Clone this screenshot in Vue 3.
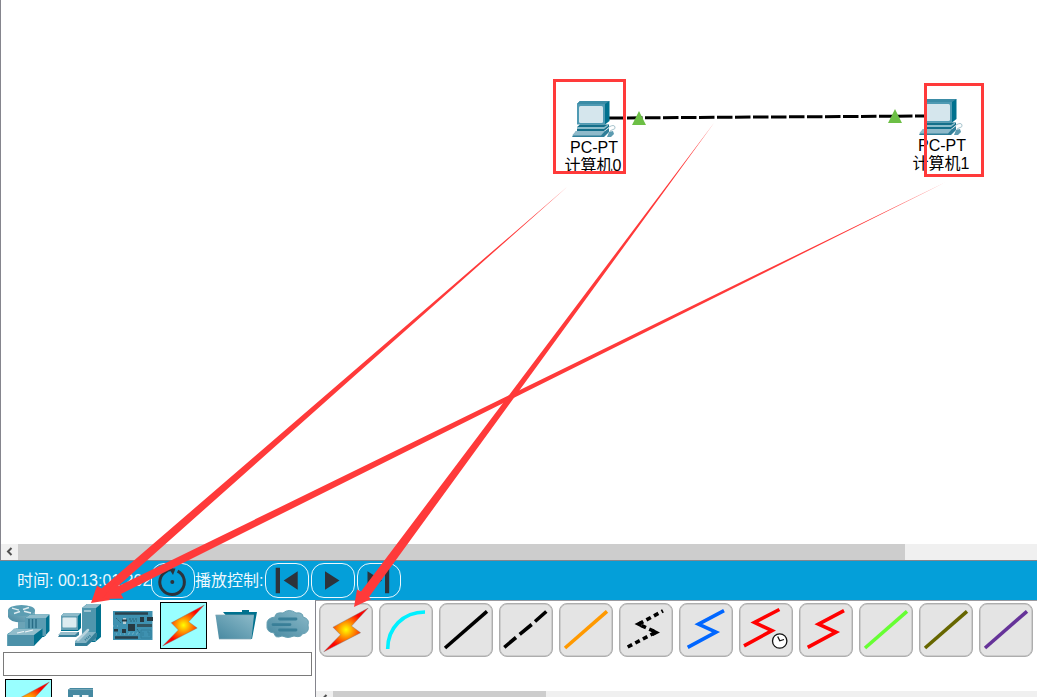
<script setup>
const nodes = [
  { id: 0, cls: 'node-a', name: '计算机0' },
  { id: 1, cls: 'node-b', name: '计算机1' }
]
const Z = 'M8.7 44.3 L37 29.1 L19.5 21.2 L45 7.7'
const L = 'M6 45 L48 8.3'
const cables = [
  { id: 'auto' },
  { id: 'console', d: 'M8.7 46 C8.7 25 24 9 46 9', color: '#00f0ff' },
  { id: 'straight', d: L, color: '#000' },
  { id: 'cross', d: 'M5.3 44.3 L17 34.5 M20.7 31.3 L32.7 21.5 M36 18.5 L47.3 8.5', color: '#000' },
  { id: 'fiber', d: L, color: '#ff9900' },
  { id: 'phone', d: 'M8.7 44 L37 29.1 L19.5 21.2 L44 7.9', color: '#000', dash: '5 3.6' },
  { id: 'coax', d: Z, color: '#0066ff' },
  { id: 'dce', d: 'M5 42.8 L33 27.6 L15.5 19.5 L40.4 6.5', color: '#ff0000', clock: true },
  { id: 'dte', d: Z, color: '#ff0000' },
  { id: 'octal', d: L, color: '#66ff33' },
  { id: 'iot', d: L, color: '#666600' },
  { id: 'usb', d: L, color: '#663399' }
]
</script>

<template>
  <div class="app">
    <svg class="defs" width="0" height="0">
      <defs>
        <radialGradient id="fire" gradientUnits="userSpaceOnUse" cx="23" cy="22.7" r="18">
          <stop offset="0" stop-color="#ffff00" />
          <stop offset=".4" stop-color="#ff9500" />
          <stop offset="1" stop-color="#ff0000" />
        </radialGradient>
        <linearGradient id="steel" x1="0" y1="1" x2="1" y2="0">
          <stop offset="0" stop-color="#4688a0" />
          <stop offset="1" stop-color="#8cbac9" />
        </linearGradient>
        <symbol id="bolt" viewBox="0 0 46 46">
          <path d="M44.3 2 L28.3 19.2 L37 25.6 L1.7 43.9 L17.7 27.6 L10.5 20.3 Z" fill="url(#fire)" stroke="#777" stroke-width=".4" />
        </symbol>
      </defs>
    </svg>

    <main class="workspace">
      <svg class="link" width="330" height="30" viewBox="600 103 330 30">
        <path d="M609 118 L925 116" stroke="#000" stroke-width="3" stroke-dasharray="15.5 2.5" />
        <path d="M639 111 L646 125 H632 Z M895 109 L902 123 H888 Z" fill="#6cbf45" />
      </svg>
      <div v-for="n in nodes" :key="n.id" class="node" :class="n.cls">
        <svg width="46" height="40" viewBox="571 99 46 40">
          <path d="M577 104 L580 101 H609.5 V121 L605 124.5 Z" fill="#00718e" />
          <path d="M577 104 L580 101 H609.5 L605 104 Z" fill="#3b8ca6" />
          <path d="M577 104 H605 V124.5 H577 Z" fill="#4f9ab3" />
          <rect x="579" y="106" width="24" height="17" rx="1.5" fill="#d5e6ed" />
          <path d="M577 127 L580 124.5 H609 V127 L604 131 H577 Z" fill="#146f8a" />
          <path d="M577 127 H604 L608 124.5 V126 L604 129 H577 Z" fill="#8cbdcb" />
          <path d="M576 131 H605 L609 128 V132 L604 137 H572 Z" fill="#307f99" />
          <path d="M576 131 H605 L601 135.5 H572 Z" fill="#8fbaca" />
          <path d="M609 127 Q614 124 615 127 Q616 129 612 130 Q608 131 612 133" fill="none" stroke="#a7c4cd" />
          <path d="M609 132 L613 131 L614 134 L611 137 H607 Z" fill="#5c9bb0" />
        </svg>
        <span>PC-PT</span>
        <span class="name">{{ n.name }}</span>
      </div>
    </main>

    <div class="scroll main-scroll">
      <svg width="17" height="15" viewBox="0 0 17 15"><path d="M10.5 4 L7 7.5 L10.5 11" fill="none" stroke="#505050" stroke-width="2" /></svg>
      <div class="thumb"></div>
    </div>

    <div class="bar">
      <span class="time">时间: 00:13:01.202</span>
      <button class="ctl reset">
        <svg width="42" height="33" viewBox="152 564 42 33"><path d="M167 571 A12.3 12.3 0 1 0 177.6 571.2" fill="none" stroke="#2d333b" stroke-width="3" /><path d="M163.5 573.5 Q167 569.5 173 569.7" fill="none" stroke="#2d333b" stroke-width="2.4" /><path d="M169 568.5 L175.5 568.5 L173 575 Z" fill="#2d333b" /><circle cx="172.3" cy="582" r="2" fill="#2d333b" /></svg>
      </button>
      <span class="label">播放控制:</span>
      <button class="ctl">
        <svg width="42" height="33" viewBox="266 564 42 33"><path d="M275.7 567.7 H280 V593.3 H275.7 Z M297.7 571.3 V589.7 L283.7 580.4 Z" fill="#2d333b" /></svg>
      </button>
      <button class="ctl">
        <svg width="42" height="33" viewBox="312 564 42 33"><path d="M325 571.3 L339.5 580.4 L325 589.7 Z" fill="#2d333b" /></svg>
      </button>
      <button class="ctl">
        <svg width="42" height="33" viewBox="358 564 42 33"><path d="M385 567.7 H389.2 V593.3 H385 Z M367.5 571.3 L382 580.4 L367.5 589.7 Z" fill="#2d333b" /></svg>
      </button>
    </div>

    <div class="bottom">
      <section class="devices">
        <div class="categories">
          <svg width="53" height="48" viewBox="0 602 53 48">
            <path d="M8 610 V617 Q10 622 21 622.5 Q32 622 35 617 V610 Z" fill="url(#steel)" />
            <ellipse cx="21.5" cy="610.5" rx="13.5" ry="5.5" fill="#5c9db2" />
            <path d="M12 608.2 L19 610.2 M31 613 L24 611.2 M14 613.5 L20 611.5 M29 607.5 L23 609.5" stroke="#dfecf1" stroke-width="1.4" />
            <path d="M18 622 H26 V629 H18 Z" fill="#6ba4b7" />
            <path d="M25 618 L30 614.5 H49.5 V631 L44 637 H25 Z" fill="#00718e" />
            <path d="M25 618 L30 614.5 H49.5 L46 618 Z" fill="#8ebbca" />
            <path d="M25 618 H46 V636 H25 Z" fill="#5a9cb2" />
            <path d="M29 619 V630 M32.5 619 V630 M36 619 V630" stroke="#276c85" stroke-width="1.4" />
            <path d="M7.5 634 L16 628.5 H42.5 V637 L34 646 H7.5 Z" fill="#00718e" />
            <path d="M7.5 635 L14 628.5 H42.5 L34 635 Z" fill="#91bdcb" />
            <path d="M7.5 635 H34 V646 H7.5 Z" fill="#4c91a9" />
            <path d="M17 633 L24 631.5 M25 632 L33 630" stroke="#eef5f8" stroke-width="1.2" />
          </svg>
          <svg width="53" height="48" viewBox="53 602 53 48">
            <path d="M82 608 L87 604 H101 V637 L95 642 H82 Z" fill="#00718e" />
            <path d="M82 608 L87 604 H101 L96 608 Z" fill="#8ebbca" />
            <path d="M82 608 H96 V641 H82 Z" fill="#4f96ad" />
            <path d="M84 611 H91" stroke="#9cc3d1" stroke-width="2" />
            <path d="M61 616 L64 613 H81 V628 L78 631 H61 Z" fill="#00718e" />
            <path d="M61 616 L64 613 H81 L78 616 Z" fill="#8ebbca" />
            <path d="M61 616 H78 V630 H61 Z" fill="#649fb3" />
            <rect x="62.5" y="617.5" width="14" height="10" rx="1" fill="#dcebf0" />
            <path d="M61 632 H79 V635 L76 637 H58 Z" fill="#37809a" />
            <path d="M61 632 H78 L75 635 H58 Z" fill="#97bdcb" />
            <path d="M75 642 L85 632 L97 633 V637 L87 646 H75 Z" fill="#357f98" />
            <path d="M75 641 L85 632 H96 L86 643 H75 Z" fill="#83b3c4" />
            <path d="M78 640 L88 630" stroke="#b8d3dd" stroke-width="2.5" stroke-linecap="round" />
            <path d="M85 640 L91 635" stroke="#397f96" stroke-width="2" stroke-dasharray="1 1" />
          </svg>
          <svg width="54" height="48" viewBox="106 602 54 48">
            <rect x="113" y="611" width="39.5" height="29" fill="#3e91b0" />
            <path d="M115 613.5 H148" stroke="#29424e" stroke-width="2.6" />
            <path d="M115 637.5 H138" stroke="#29424e" stroke-width="2.6" />
            <path d="M128 624 H135 V631 H128 Z M140 617 H144 V622 H140 Z M147 617 H153 V621 H147 Z M122 629 H126 V633 H122 Z M114 629 H118 V631.5 H114 Z" fill="#263942" />
            <path d="M137 625.5 H152" stroke="#31545f" stroke-width="3" />
            <path d="M123 618 H126 V624 H123 Z" fill="#b9cdd4" />
            <path d="M122 620.5 H127" stroke="#263942" stroke-width="2" />
            <path d="M116 618 L121 623 M129 619 H137 M130 621 H137 M137 629 L140 633" stroke="#286579" stroke-dasharray="2 1" />
            <path d="M141 630 H151 V638 H141 Z M143 632 V636 M147 632 H149 V636" fill="none" stroke="#33809c" />
            <path d="M113 626 H121 M116 634 H137 M129 633 H139" stroke="#79b4c9" stroke-dasharray="1 3" />
          </svg>
          <div class="selected"><svg width="45" height="45" viewBox="0 0 46 46"><use href="#bolt" /></svg></div>
          <svg width="54" height="48" viewBox="208 602 54 48">
            <path d="M223 612 H242 V610 H249 V612 H257 L252 639 H246 Z" fill="#00718e" />
            <path d="M215.5 615 H254 L251.5 639 H219 Z" fill="url(#steel)" />
            <path d="M215.5 615 H254 M219 639 H251" stroke="#83a6b4" stroke-width=".7" />
          </svg>
          <svg width="52" height="48" viewBox="262 602 52 48">
            <path d="M275 617 Q275 612 283 613 Q289 608 296 613 Q303 612 303 617 Q310 619 308 625 Q310 633 302 634 Q301 638 294 636 Q288 639 282 636 Q275 639 274 633 Q266 632 267 625 Q266 618 275 617 Z" fill="url(#steel)" stroke="#659fb2" />
            <path d="M279.5 619 H296 M273 624.6 H290 M279.5 630 H296" stroke="#397f98" stroke-width="2.8" stroke-linecap="round" />
          </svg>
        </div>
        <div class="search"></div>
        <div class="subs">
          <div class="selected"><svg width="45" height="45" viewBox="0 0 46 46"><use href="#bolt" /></svg></div>
          <svg width="26" height="18" viewBox="68 679 26 18"><path d="M68 690 L70 688 H93 V697 H68 Z" fill="#4589a1" /><path d="M68 689.5 H93" stroke="#73a5b6" /><path d="M73 695 H79.5 V697 H73 Z M82 695 H88.5 V697 H82 Z" fill="#f2f7f9" /></svg>
        </div>
      </section>
      <section class="cables">
        <div class="cable-list">
          <button v-for="c in cables" :key="c.id" class="cable">
            <svg v-if="c.d" width="54" height="54" viewBox="0 0 54 54">
              <path :d="c.d" fill="none" :stroke="c.color" stroke-width="3.6" :stroke-dasharray="c.dash" />
              <path v-if="c.dash" d="M15.5 21 L22.5 17.5 V24.5 Z M41 29.5 L34 26 V33 Z" fill="#000" />
              <g v-if="c.clock" fill="#fff" stroke="#111" stroke-width="1.3"><circle cx="40.7" cy="38" r="7.2" /><path d="M38.7 33.5 L40.8 37.8 L45 36.5" fill="none" /></g>
            </svg>
            <svg v-else width="48" height="48" viewBox="0 0 46 46"><use href="#bolt" /></svg>
          </button>
        </div>
        <div class="scroll cable-scroll">
          <svg width="17" height="15" viewBox="0 0 17 15"><path d="M10.5 4 L7 7.5 L10.5 11" fill="none" stroke="#505050" stroke-width="2" /></svg>
          <div class="thumb"></div>
        </div>
      </section>
    </div>

    <svg class="notes" width="1037" height="697" viewBox="0 0 1037 697">
      <g fill="none" stroke="#ff3a3a" stroke-width="3">
        <rect x="554.5" y="80.5" width="70" height="92" />
        <rect x="925.5" y="84.5" width="57" height="91" />
      </g>
      <g fill="#ff3a3a">
        <path d="M567 187 L101.5 588.5 L97 585.5 L91 603 L110 600 L107.5 595.5 Z" />
        <path d="M946 182 L117.5 586.5 L115 582.5 L102 599 L123.5 598.5 L121 594 Z" />
        <path d="M714 123 L361 591.5 L357 589.5 L354 607 L371 599 L369 597 Z" />
      </g>
    </svg>
  </div>
</template>

<style>
body { margin: 0; overflow: hidden; }
</style>

<style scoped>
.app { position: relative; width: 1037px; height: 697px; overflow: hidden; display: flex; flex-direction: column; background: #fff; font: 16px/18px "Liberation Sans", "Noto Sans CJK SC", sans-serif; color: #000; }
.app svg { display: block; flex: none; }
.defs { position: absolute; }
.workspace { position: relative; height: 544px; flex: none; box-sizing: border-box; border-left: 1px solid #85858d; }
.link { position: absolute; left: 599px; top: 103px; }
.node { position: absolute; width: 70px; display: flex; flex-direction: column; align-items: center; white-space: nowrap; }
.name { margin-left: -2px; }
.node-a { left: 558px; top: 99px; }
.node-b { left: 906px; top: 97px; }
.node-b svg { margin-left: -2px; }
.scroll { display: flex; background: #f0f0f0; flex: none; }
.scroll .thumb { background: #cdcdcd; }
.main-scroll { height: 17px; box-sizing: border-box; border-left: 1px solid #85858d; border-bottom: 1px solid #85858d; }
.main-scroll .thumb { width: 887px; }
.bar { height: 39px; flex: none; display: flex; align-items: center; background: #049fd9; color: #eef8fd; padding-left: 17px; box-sizing: border-box; white-space: nowrap; }
.time { width: 134px; overflow: hidden; }
.label { width: 70px; box-sizing: border-box; }
.ctl { width: 44px; height: 35px; padding: 0; margin: 0 2px 0 0; border: 1px solid #eaf7fd; border-radius: 13px; background: none; flex: none; }
.ctl.reset { margin: 0; }
.bottom { height: 97px; display: flex; flex: none; }
.devices { width: 315px; flex: none; overflow: hidden; }
.categories { display: flex; height: 52px; padding-top: 2px; box-sizing: border-box; }
.selected { width: 47px; height: 47px; box-sizing: border-box; border: 1px solid #000; background: #99ffff; flex: none; margin-right: 1px; }
.search { margin-left: 3px; width: 309px; height: 24px; box-sizing: border-box; border: 1px solid #7a7a7a; }
.subs { display: flex; gap: 15px; padding: 3px 0 0 5px; }
.cables { flex: 1; min-width: 0; overflow: hidden; border-left: 1px solid #85858d; border-top: 1px solid #9a9aa0; }
.cable-list { display: flex; gap: 6px; padding: 2px 0 0 3px; height: 90px; box-sizing: border-box; }
.cable { width: 54px; height: 54px; flex: none; box-sizing: border-box; padding: 0; border: 1px solid #adadad; box-shadow: inset 0 0 0 .5px #b5b5b5; border-radius: 8px; background: #e4e4e4; display: flex; align-items: center; justify-content: center; }
.cable-scroll { height: 15px; }
.cable-scroll .thumb { width: 213px; }
.notes { position: absolute; left: 0; top: 0; pointer-events: none; }
</style>
